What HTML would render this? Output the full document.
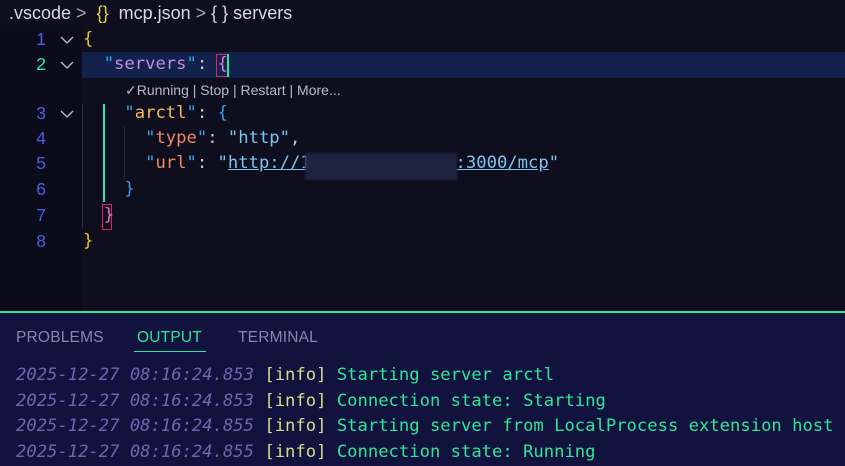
<!DOCTYPE html>
<html><head><meta charset="utf-8"><style>
*{margin:0;padding:0;box-sizing:border-box}
body{width:845px;height:466px;overflow:hidden;background:#0f0e1f;font-family:"Liberation Sans",sans-serif;position:relative}
.bc{position:absolute;left:0;top:0;width:845px;height:27px;background:#0f0e1f;color:#d8d8e4;font-size:18px;line-height:26px;padding-left:9px;white-space:pre}
.gut{position:absolute;left:0;top:27px;width:82px;height:284px;background:#0c0b1a}
.mono{font-family:"DejaVu Sans Mono","Liberation Mono",monospace;font-size:17.2px;white-space:pre}
.ln{position:absolute;width:46px;text-align:right;color:#4a5ee8;font-family:"Liberation Sans",sans-serif;font-size:17.5px;line-height:25px}
.fold{position:absolute;left:59px;width:16px;height:16px}
.code{position:absolute;left:83px;line-height:25px}
.hl{position:absolute;left:82px;top:52px;width:763px;height:26px;background:#13224d}
.panel{position:absolute;left:0;top:311px;width:845px;height:155px;background:#12123f;border-top:2px solid #2ee68f}
.tab{position:absolute;top:16px;font-size:15.5px;color:#8585b0;letter-spacing:.2px}
.out{position:absolute;left:16px;line-height:25.5px}
.ts{color:#6c68b0;font-style:italic}
.inf{color:#d8dc8a}
.msg{color:#2ee69a}
</style></head><body>
<div class="bc">.vscode <span style="color:#aaa">&gt;</span>  <span style="color:#e6d34a">{}</span>  mcp.json <span style="color:#aaa">&gt;</span> { } servers</div>
<div class="gut"></div>
<div class="hl"></div>
<div class="ln" style="top:27px;color:#4a5ee8">1</div>
<div class="ln" style="top:52px;color:#2ee6c0">2</div>
<div class="ln" style="top:101px">3</div>
<div class="ln" style="top:126px">4</div>
<div class="ln" style="top:151px">5</div>
<div class="ln" style="top:177px">6</div>
<div class="ln" style="top:203px">7</div>
<div class="ln" style="top:229px">8</div>
<svg class="fold" style="top:32px" viewBox="0 0 16 16"><path d="M2 5l6 6 6-6" stroke="#c0c0d0" stroke-width="1.3" fill="none"/></svg>
<svg class="fold" style="top:57px" viewBox="0 0 16 16"><path d="M2 5l6 6 6-6" stroke="#c0c0d0" stroke-width="1.3" fill="none"/></svg>
<svg class="fold" style="top:106px" viewBox="0 0 16 16"><path d="M2 5l6 6 6-6" stroke="#c0c0d0" stroke-width="1.3" fill="none"/></svg>
<div style="position:absolute;left:103px;top:104px;width:2px;height:98px;background:#2ee6c0"></div>
<div style="position:absolute;left:82px;top:104px;width:1px;height:125px;background:#2a2a48"></div>
<div style="position:absolute;left:124px;top:127px;width:1px;height:52px;background:#2a2a48"></div>
<div style="position:absolute;left:216px;top:54px;width:12px;height:23px;border:1px solid #e0245a"></div>
<div style="position:absolute;left:227px;top:54px;width:2px;height:23px;background:#2ee68f"></div>
<div style="position:absolute;left:102px;top:204px;width:10px;height:26px;border:1px solid #e0245a"></div>
<div class="mono code" style="top:27px;color:#f5c518">{</div>
<div class="mono code" style="top:52px"><span style="color:#3aa6e8">  "</span><span style="color:#c58ae8">servers</span><span style="color:#3aa6e8">"</span><span style="color:#ccc">: </span><span style="color:#d878d8">{</span></div>
<div style="position:absolute;left:125px;top:80px;font-size:14px;color:#b8b8c8;line-height:20px">✓Running | Stop | Restart | More...</div>
<div class="mono code" style="top:101px"><span style="color:#3aa6e8">    "</span><span style="color:#f5b85a">arctl</span><span style="color:#3aa6e8">"</span><span style="color:#ccc">: </span><span style="color:#3a9ae8">{</span></div>
<div class="mono code" style="top:126px"><span style="color:#3aa6e8">      "</span><span style="color:#f08a60">type</span><span style="color:#3aa6e8">"</span><span style="color:#ccc">: </span><span style="color:#7cc4f0">"http"</span><span style="color:#ccc">,</span></div>
<div class="mono code" style="top:151px"><span style="color:#3aa6e8">      "</span><span style="color:#f08a60">url</span><span style="color:#3aa6e8">"</span><span style="color:#ccc">: </span><span style="color:#7cc4f0">"<u>http://1              :3000/mcp</u>"</span></div>
<div style="position:absolute;left:305px;top:153px;width:152px;height:27px;background:#1e2440;filter:blur(1px)"></div>
<div class="mono code" style="top:177px;color:#3a9ae8">    }</div>
<div class="mono code" style="top:203px;color:#d878d8">  }</div>
<div class="mono code" style="top:229px;color:#f5c518">}</div>
<div class="panel">
<div class="tab" style="left:16px">PROBLEMS</div>
<div class="tab" style="left:137px;color:#2ee69a">OUTPUT</div>
<div style="position:absolute;left:134px;top:38px;width:72px;height:1px;background:#2ee69a"></div>
<div class="tab" style="left:238px">TERMINAL</div>
<div class="mono out" style="top:50px"><span class="ts">2025-12-27 08:16:24.853</span> <span class="inf">[info]</span> <span class="msg">Starting server arctl</span></div>
<div class="mono out" style="top:75.5px"><span class="ts">2025-12-27 08:16:24.853</span> <span class="inf">[info]</span> <span class="msg">Connection state: Starting</span></div>
<div class="mono out" style="top:101px"><span class="ts">2025-12-27 08:16:24.855</span> <span class="inf">[info]</span> <span class="msg">Starting server from LocalProcess extension host</span></div>
<div class="mono out" style="top:127px"><span class="ts">2025-12-27 08:16:24.855</span> <span class="inf">[info]</span> <span class="msg">Connection state: Running</span></div>
</div>
</body></html>
